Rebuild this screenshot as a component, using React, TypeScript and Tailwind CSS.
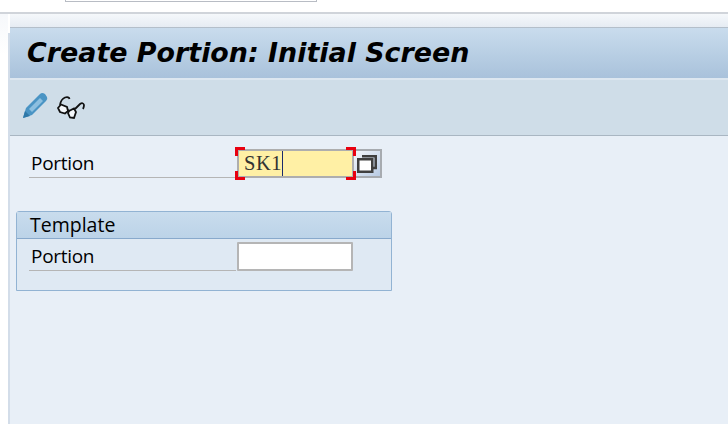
function PencilIcon() {
  return (
    <svg width="25" height="26" viewBox="0 0 25 26">
      <path d="M0 26 L3 16 L17 2 Q19 0 22 2 L24 5 Q25 7 23 9 L9 23 Z" fill="#4a94c4" />
      <path d="M6 17 L17 6 L20 9 L9 20 Z" fill="#8cbfe0" />
      <path d="M0 26 L2 19 L7 24 Z" fill="#2f78a8" />
    </svg>
  );
}

function GlassesIcon() {
  return (
    <svg width="28" height="23" viewBox="0 0 28 23" fill="none" stroke="#111" strokeWidth="1.8" className="mt-[4px]">
      <path d="M3 9 Q4 3 8 1.5 Q12 0.5 12.5 3" />
      <path d="M1 12 L4 8.5 L10 11 L11 15 L8 17.5 L3 16 Z" fill="#f4f7fa" />
      <path d="M12 15 L17 12.5 L19 16 L17 22 L13 21.5 L11 17 Z" fill="#f4f7fa" />
      <path d="M11 14 L13 15" />
      <path d="M18 13 L23 8 Q26 6 27 9 Q27 11 26 13" />
    </svg>
  );
}

function CopyIcon() {
  return (
    <svg width="20" height="18" viewBox="0 0 20 18" fill="none">
      <path d="M5 1.25 H18.75 V13 H15" stroke="#3f3f3f" strokeWidth="2.5" />
      <rect x="1.25" y="4.25" width="14" height="12.5" fill="#fff" stroke="#3f3f3f" strokeWidth="2.5" />
    </svg>
  );
}

function Label({ text }: { text: string }) {
  return (
    <div className="w-[207px] h-[29px] shrink-0 border-b border-[#b5b5b5] pl-[2px] text-[19px] tracking-[-0.3px] leading-[29px] text-black">
      {text}
    </div>
  );
}

export default function App() {
  return (
    <div className="w-[728px] h-[424px] overflow-hidden bg-white flex flex-col font-['Open_Sans',sans-serif]">
      <div className="h-[12px] shrink-0 bg-white pl-[65px]">
        <div className="w-[252px] h-[2px] border-x border-b border-[#b8bcc4] bg-white" />
      </div>
      <div className="h-[2px] shrink-0 bg-[#d0d4da]" />
      <div className="flex flex-1 min-h-0">
        <div className="w-[8px] shrink-0 bg-gradient-to-b from-[#f6f8fb] to-white to-[10%]" />
        <div className="w-[2px] shrink-0 mt-[19px] bg-[#d3dde9]" />
        <div className="flex-1 flex flex-col bg-[#e8eff7]">
          <div className="h-[14px] shrink-0 bg-gradient-to-b from-[#f5f8fb] to-[#e6ecf3] border-b border-[#b4bfca]" />
          <div className="h-[52px] shrink-0 flex items-center pl-[17px] bg-gradient-to-b from-[#c9dced] to-[#a9c2db] border-b-2 border-[#dde7f0]">
            <h1 className="font-['DejaVu_Sans',sans-serif] font-bold italic text-[26.9px] leading-[34px] text-black whitespace-nowrap">
              Create Portion: Initial Screen
            </h1>
          </div>
          <div className="h-[56px] shrink-0 flex items-start gap-[9px] pl-[13px] pt-[12px] bg-[#cfdde8] border-b border-[#a9b6c2]">
            <PencilIcon />
            <GlassesIcon />
          </div>
          <div className="flex flex-col pt-[13px]">
            <div className="flex items-start pl-[19px]">
              <Label text="Portion" />
              <div className="relative ml-px w-[117px] h-[29px] bg-[#fff0a5] border-2 border-[#aeaeae] font-['Liberation_Serif',serif] tracking-[0.5px] text-[20.5px] leading-[25px] pl-[5px] text-[#333] flex">
                <span>SK1</span>
                <span className="w-px h-[25px] bg-[#1a2a6c]" />
                <span className="absolute -left-[4px] -top-[4px] w-[10px] h-[9px] border-l-[3px] border-t-[3px] border-[#e8000f]" />
                <span className="absolute -right-[4px] -top-[4px] w-[10px] h-[9px] border-r-[3px] border-t-[3px] border-[#e8000f]" />
                <span className="absolute -left-[4px] -bottom-[4px] w-[10px] h-[9px] border-l-[3px] border-b-[3px] border-[#e8000f]" />
                <span className="absolute -right-[4px] -bottom-[4px] w-[10px] h-[9px] border-r-[3px] border-b-[3px] border-[#e8000f]" />
              </div>
              <div className="w-[28px] h-[29px] border-2 border-l-0 border-[#a7abb0] bg-gradient-to-br from-[#f4f7fb] to-[#b8cbe4] flex items-center justify-center">
                <CopyIcon />
              </div>
            </div>
            <div className="ml-[6px] mt-[33px] w-[376px] h-[80px] border border-[#92b3d3] rounded-t-[3px] bg-[#dfe9f3] flex flex-col">
              <div className="h-[27px] shrink-0 pl-[13px] text-[19.5px] leading-[26px] text-black bg-gradient-to-b from-[#c9dced] to-[#bcd3e8] border-b border-[#88a9cc]">
                Template
              </div>
              <div className="flex items-start pl-[12px] pt-[3px]">
                <Label text="Portion" />
                <div className="ml-px w-[116px] h-[29px] bg-white border-2 border-[#b5b5b5] rounded-[1px]" />
              </div>
            </div>
          </div>
        </div>
      </div>
    </div>
  );
}
